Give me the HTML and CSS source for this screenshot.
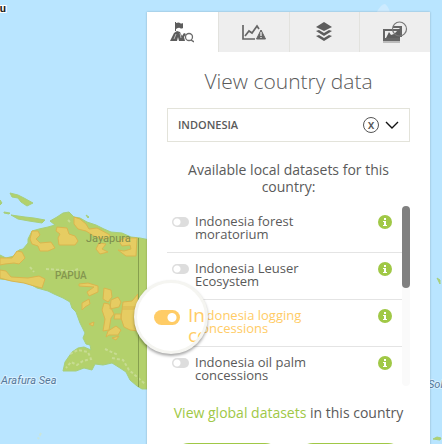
FILE: index.html
```html
<!DOCTYPE html>
<html lang="en">
<head>
<meta charset="utf-8">
<meta name="viewport" content="width=device-width, initial-scale=1">
<title>View country data</title>
<link rel="stylesheet" href="styles.css">
</head>
<body>
<svg class="map" viewBox="0 0 442 444" preserveAspectRatio="xMinYMin slice" role="img" aria-label="Map of Papua">
  <g class="land">
    <path d="M0 255L6 258 14 256 19 250 23 249 28 243 28 239 32 231 39 229 48 227 55 225 50 221 57 217 63 213 69 212 74 217 80 218 87 222 96 225 104 229 111 232 122 233 131 237 140 238 150 240V389L142 389 137 386 130 380 126 372 120 368 112 363 103 365 95 364 92 370 84 368 76 371 63 371 65 362 72 352 78 348 84 347 91 350 90 345 86 344 83 338 85 333 80 323 76 312 72 308 70 302 63 298 54 294 48 291 37 288 30 284 18 281 0 279Z"/>
    <path d="M10 193L18 195 24 198 33 203 27 206 21 202 18 198 12 197Z"/>
    <path d="M11 215L25 217 34 218 45 220 42 223 29 221 18 219Z"/>
    <path d="M4 212L10 213 9 214 4 213ZM0 200L2 203 0 205ZM86 215L89 217 88 218ZM437 278L440 280 440 284ZM433 439L437 437 441 438 440 440Z"/>
  </g>
  <path class="relief" d="M70 354L78 350 88 352 91 359 83 361 77 365 71 362 66 368M30 267L34 272M46 269L62 270 70 272 78 269M112 358L123 360 129 370 136 376 145 384M68 220L70 222M105 349L118 355M41 433L38 439"/>
  <g class="concessions">
    <path d="M74 217L80 219 86 224 89 229 97 228 110 235 108 239 98 238 94 236 86 231 78 229 74 224Z"/>
    <path d="M119 241L124 238 137 238 136 256 126 256 118 250 124 251 131 249 130 245 122 246ZM99 243L106 244 102 249 108 252 100 254 96 249Z"/>
    <path d="M57 227L67 228 69 234 75 236 78 241 75 245 59 245 58 238 60 234 56 231Z"/>
    <path d="M32 231L38 231 40 235 36 239 40 243 51 242 55 248 48 251 40 251 38 246 32 244 30 239Z"/>
    <path d="M0 258L12 258 17 251 22 252 25 258 19 264 14 263 5 264 0 265Z"/>
    <path d="M0 270L6 271 11 277 28 278 39 276 45 279 42 288 34 286 24 283 11 281 0 278Z"/>
    <path d="M79 284L88 283 98 286 98 292 89 296 87 292 94 287 79 286Z"/>
    <path d="M104 288L111 290 112 297 108 302 103 299Z"/>
    <path d="M82 303L89 299 90 304 85 307 82 310Z"/>
    <path d="M111 300L118 297 121 302 119 307 110 309ZM104 303L109 304 114 314 111 318 109 330 103 331 105 319 102 310ZM115 314L121 314 121 319 114 319ZM123 302L132 301 138 294V331L130 330 124 327 121 318ZM108 331L116 326 121 330 118 335 109 335 106 337ZM112 338L119 336 116 340ZM89 324L94 322 93 326Z"/>
    <path d="M122 309H139M122 307H139"/>
  </g>
  <path class="border" d="M138.500 238V387"/>
  <path class="boat" d="M377 12Q381 4 385 4 388 6 390 12Z"/>
  <g class="labels">
    <text class="town" x="86" y="242">Jayapura</text>
    <text class="province" x="55" y="279">PAPUA</text>
    <text class="sea" x="1" y="384">Arafura Sea</text>
    <text class="sea" x="428" y="388">Solomon</text>
    <text class="capital" x="6" y="12" text-anchor="end">Palau</text>
  </g>
</svg>

<main class="panel">
  <nav class="tabs" aria-label="Data tools">
    <button class="tab active" type="button" aria-label="Country data">
      <svg width="24" height="22" viewBox="0 0 24 22"><path d="M5 1H6V10H5ZM6 2Q9 1 10 2T13 2V7Q11 8 10 7T6 8ZM0 20L4 12 7 10 10 11 12 15 14 12 16 13 14 16 15 20H9L8 16 7 20Z" fill="#5d5d5d"/><path d="M6 13L4 18M10 12L11 17" stroke="#bbb" fill="none"/><circle cx="19" cy="16" r="3.500" fill="#fff" stroke="#6b6b6b" stroke-width="1.300"/><path d="M21 19L24 21" stroke="#6b6b6b" stroke-width="1.500"/></svg>
    </button>
    <button class="tab" type="button" aria-label="Analysis">
      <svg width="24" height="20" viewBox="0 0 24 20"><path d="M1 3V17H13M3 14L7 9 10 11 15 4 17 7" fill="none" stroke="#666" stroke-width="1.700"/><path d="M19 8L23.500 17H14.500Z" fill="#666" stroke="#666" stroke-linejoin="round"/><path d="M19 10V14M19 15V16" stroke="#eee" stroke-width="1.300"/></svg>
    </button>
    <button class="tab" type="button" aria-label="Layers">
      <svg width="18" height="20" viewBox="0 0 18 20"><path d="M9 0L17 5 9 9 1 5ZM1 9L4 8 9 11 14 8 17 9 9 14ZM1 14L4 13 9 16 14 13 17 14 9 19Z" fill="#5d5d5d"/></svg>
    </button>
    <button class="tab" type="button" aria-label="Imagery">
      <svg width="26" height="22" viewBox="0 0 26 22"><path d="M11 6H19V15H17" fill="none" stroke="#666" stroke-width="2"/><path d="M2 9H17V18H2Z" fill="#eee" stroke="#666" stroke-width="2"/><path d="M1 20H18V22H1Z" fill="#bbb"/><path d="M4 17L7 11 9 14 12 13 18 7V17Z" fill="#5d5d5d"/><path d="M1 19H18" stroke="#666" stroke-width="2"/><circle cx="17.500" cy="8" r="7" fill="none" stroke="#777" stroke-width="1.200"/></svg>
    </button>
  </nav>

  <div class="content">
    <h1>View country data</h1>
    <div class="field">
      <select aria-label="Country"><option>INDONESIA</option></select>
      <button class="clear" type="button" aria-label="Clear country">x</button>
      <svg class="chevron" width="14" height="8" viewBox="0 0 14 8"><path d="M1 1L7 7 13 1" fill="none" stroke="#111" stroke-width="1.400"/></svg>
    </div>
    <h2>Available local datasets for this country:</h2>

    <div class="scroller">
      <ul class="datasets">
        <li>
          <input type="checkbox" id="forest"><label for="forest">Indonesia forest moratorium</label>
          <button class="info" type="button" aria-label="About forest moratorium"><svg viewBox="0 0 14 14"><path d="M6 3H8V5H6ZM5 6H8V10H9V11H5V10H6V7H5Z"/></svg></button>
        </li>
        <li>
          <input type="checkbox" id="leuser"><label for="leuser">Indonesia Leuser Ecosystem</label>
          <button class="info" type="button" aria-label="About Leuser Ecosystem"><svg viewBox="0 0 14 14"><path d="M6 3H8V5H6ZM5 6H8V10H9V11H5V10H6V7H5Z"/></svg></button>
        </li>
        <li class="selected">
          <input type="checkbox" id="logging" checked><label for="logging">Indonesia logging concessions</label>
          <button class="info" type="button" aria-label="About logging concessions"><svg viewBox="0 0 14 14"><path d="M6 3H8V5H6ZM5 6H8V10H9V11H5V10H6V7H5Z"/></svg></button>
          <div class="lens" aria-hidden="true"><span class="lens-toggle"></span><span class="lens-text">In<br>co</span></div>
        </li>
        <li>
          <input type="checkbox" id="palm"><label for="palm">Indonesia oil palm concessions</label>
          <button class="info" type="button" aria-label="About oil palm concessions"><svg viewBox="0 0 14 14"><path d="M6 3H8V5H6ZM5 6H8V10H9V11H5V10H6V7H5Z"/></svg></button>
        </li>
      </ul>
      <div class="track"><div class="thumb"></div></div>
    </div>

    <p class="global"><a href="#global">View global datasets</a> in this country</p>
    <div class="actions">
      <button type="button" aria-label="Analyze"></button>
      <button type="button" aria-label="Subscribe"></button>
    </div>
  </div>
</main>
</body>
</html>
```

FILE: styles.css
```css
* {
  box-sizing: border-box;
}

body {
  margin: 0;
  height: 100vh;
  overflow: hidden;
  background: #b9e5ff;
  color: #5a5a5a;
  font-family: "Open Sans", "Noto Sans", sans-serif;
}

button {
  padding: 0;
  border: 0;
  font: inherit;
  color: inherit;
}

.map {
  position: absolute;
  inset: 0;
  width: 100%;
  height: 100%;
}

.land {
  fill: #b3d16c;
  stroke: #a6cf7c;
}

.relief {
  fill: none;
  stroke: #dbe8b8;
  stroke-width: 2;
  stroke-dasharray: 3 2;
  opacity: 0.5;
}

.concessions {
  fill: #e6cc62;
  stroke: #d9b64e;
}

.border {
  stroke: #869f4e;
}

.boat {
  fill: #cdebff;
}

.labels {
  font-family: Roboto, sans-serif;
}

.town {
  font-size: 11px;
  fill: #7c8c4c;
}

.province {
  font-size: 10px;
  font-weight: 500;
  fill: #84964f;
}

.sea {
  font-size: 11px;
  font-style: italic;
  fill: #55789a;
  stroke: #d8f0ff;
  stroke-width: 2px;
  paint-order: stroke;
}

.capital {
  font-size: 11px;
  font-weight: 700;
  fill: #222;
  stroke: #fff;
  stroke-width: 2px;
  paint-order: stroke;
}

.panel {
  position: relative;
  margin: 12px 12px 0 147px;
  background: #fff;
  box-shadow: 0 0 2px rgba(0, 0, 0, 0.25);
}

.tabs {
  display: grid;
  grid-template-columns: repeat(4, 1fr);
  height: 40px;
}

.tab {
  display: flex;
  align-items: center;
  justify-content: center;
  background: #eee;
  border-left: 1px solid #e2e2de;
}

.tab.active {
  background: #fff;
  border: 0;
}

.content {
  padding: 16px 20px 0;
}

h1 {
  margin: 0 0 14px;
  font-size: 21px;
  line-height: 26px;
  font-weight: 300;
  text-align: center;
}

.field {
  display: flex;
  align-items: center;
  gap: 6px;
  height: 34px;
  padding: 0 10px;
  border: 1px solid #e3e3da;
}

select {
  flex: 1;
  min-width: 0;
  padding: 0;
  border: 0;
  appearance: none;
  background: none;
  color: #5a5a5a;
  font: 600 11px/16px "Open Sans", sans-serif;
}

.clear {
  width: 16px;
  height: 16px;
  border: 1px solid #555;
  border-radius: 50%;
  background: none;
  font-size: 12px;
  font-weight: 600;
  line-height: 12px;
}

h2 {
  margin: 19px 0 11px;
  padding: 0 16px;
  font-size: 14px;
  line-height: 17px;
  font-weight: 400;
  text-align: center;
}

.scroller {
  display: flex;
}

.datasets {
  flex: 1;
  margin: 0;
  padding: 0;
  list-style: none;
}

.datasets li {
  position: relative;
  display: flex;
  align-items: flex-start;
  padding: 9px 10px 11px 5px;
  border-bottom: 1px solid #e4e4e4;
}

.datasets li:last-child {
  padding-bottom: 4px;
  border: 0;
}

.datasets input {
  width: 17px;
  height: 10px;
  margin: 2px 6px 0 0;
  border-radius: 5px;
  appearance: none;
  background: radial-gradient(circle at 5px 5px, #fff 3px, transparent 4px) #ddd;
}

.datasets label {
  flex: 1;
  padding-right: 60px;
  font-size: 13px;
  line-height: 13px;
}

.datasets .selected label {
  color: #fc6;
}

.info {
  width: 14px;
  height: 14px;
  border-radius: 50%;
  background: #a0c846;
}

.info svg {
  display: block;
  fill: #fff;
}

.lens {
  position: absolute;
  top: -20px;
  left: -33px;
  display: flex;
  gap: 8px;
  width: 74px;
  height: 74px;
  padding: 22px 0 0 17px;
  overflow: hidden;
  border: 3px solid #f5f5f1;
  border-radius: 50%;
  background: #fff;
  box-shadow: 0 2px 3px rgba(0, 0, 0, 0.35);
}

.lens-toggle {
  flex: none;
  width: 26px;
  height: 15px;
  margin-top: 5px;
  border-radius: 8px;
  background: radial-gradient(circle at 18px 50%, #fff 4px, transparent 5px) #fc6;
}

.lens-text {
  color: #fc6;
  font-size: 19px;
  line-height: 20px;
}

.track {
  width: 8px;
  border-radius: 4px;
  background: #fafafa;
}

.thumb {
  height: 82px;
  border-radius: 4px;
  background: #808080;
}

.global {
  margin: 18px 0 21px;
  font-size: 14px;
  line-height: 18px;
  text-align: center;
}

.global a {
  color: #a0c846;
  text-decoration: none;
}

.actions {
  display: flex;
  gap: 16px;
  padding: 0 6px;
}

.actions button {
  flex: 1;
  height: 32px;
  border-radius: 16px;
  background: #a0c846;
}
```
